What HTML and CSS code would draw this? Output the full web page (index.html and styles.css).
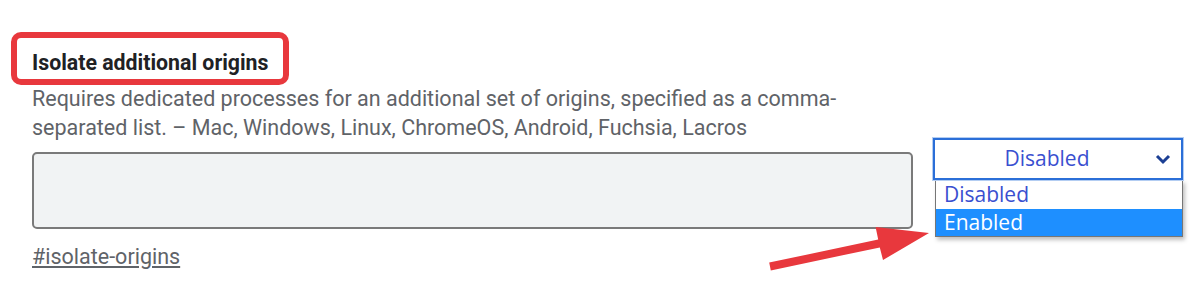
FILE: index.html
```html
<!DOCTYPE html>
<html lang="en">
<head>
    <meta charset="UTF-8">
    <title>Isolate additional origins</title>
    <link rel="stylesheet" href="styles.css">
</head>
<body>
    <div class="flag">
        <div class="flag-main">
            <h2 class="flag-title">Isolate additional origins</h2>
            <p class="flag-desc">Requires dedicated processes for an additional set of origins, specified as a comma-separated list. – Mac, Windows, Linux, ChromeOS, Android, Fuchsia, Lacros</p>
            <textarea class="flag-input"></textarea>
            <a class="flag-link" href="#isolate-origins">#isolate-origins</a>
        </div>

        <div class="flag-control">
            <div class="select-box">
                <span>Disabled</span>
                <svg class="chevron" width="16" height="11" viewBox="0 0 16 11">
                    <path d="M2 2 L8 8 L14 2" fill="none" stroke="#1c3f94" stroke-width="3"/>
                </svg>
            </div>
            <ul class="select-list">
                <li>Disabled</li>
                <li class="selected">Enabled</li>
            </ul>
        </div>
    </div>

    <!-- annotation arrow -->
    <svg class="arrow" width="1200" height="307" viewBox="0 0 1200 307">
        <polygon fill="#e8383d" points="769.2,262.6 878.2,239.6 875.6,227 929,233 883,260 879.8,247.4 770.8,270.4"/>
    </svg>
</body>
</html>
```

FILE: styles.css
```css
* {
    margin: 0;
    padding: 0;
    box-sizing: border-box;
}

body {
    font-family: Roboto, 'Liberation Sans', sans-serif;
    background: white;
    width: 1200px;
    height: 307px;
    overflow: hidden;
    position: relative;
}

.flag {
    display: flex;
    align-items: flex-start;
    padding: 32px 0 0 32px;
}

.flag-main {
    width: 881px;
}

.flag-title {
    display: inline-block;
    margin-left: -21px;
    border: 6px solid #e8383d;
    border-radius: 10px;
    padding: 11px 14px 3px 15px;
    font-size: 21.3px;
    line-height: 27px;
    font-weight: 700;
    color: #202124;
}

.flag-desc {
    margin-top: -1px;
    font-size: 21.5px;
    line-height: 29px;
    color: #5f6368;
}

.flag-input {
    display: block;
    width: 881px;
    height: 77px;
    margin-top: 10px;
    background: #f1f3f4;
    border: 2px solid #7a7a7a;
    border-radius: 5px;
    resize: none;
}

.flag-link {
    display: inline-block;
    margin-top: 13px;
    font-size: 21.5px;
    line-height: 29px;
    color: #5f6368;
}

.flag-control {
    margin: 106px 0 0 20px;
    width: 250px;
    font-family: 'Open Sans', 'Noto Sans', sans-serif;
    font-size: 21px;
}

.select-box {
    position: relative;
    height: 42px;
    padding-right: 22px;
    border: 2px solid #2b6fd8;
    box-shadow: 0 0 0 1px #b3cdf2;
    color: #3a4fd0;
    text-align: center;
    line-height: 37px;
}

.chevron {
    position: absolute;
    right: 10px;
    top: 14px;
}

.select-list {
    list-style: none;
    margin: 0 0 0 2px;
    border: 1px solid #767676;
    box-shadow: 2px 3px 4px rgba(0, 0, 0, 0.25);
    background: white;
}

.select-list li {
    height: 28px;
    line-height: 27px;
    padding-left: 8px;
    color: #3a4fd0;
}

.select-list li.selected {
    height: 27px;
    background: #1e8fff;
    color: white;
}

.arrow {
    position: absolute;
    left: 0;
    top: 0;
    pointer-events: none;
}
```
